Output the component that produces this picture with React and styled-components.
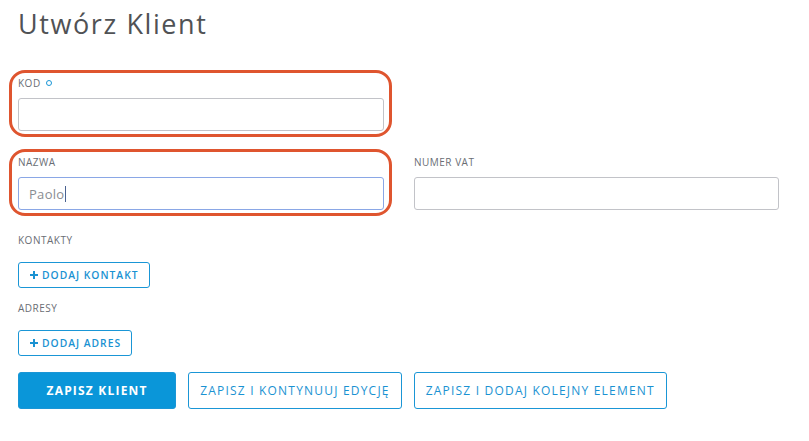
import React from "react";
import styled, { createGlobalStyle, css } from "styled-components";

const Global = createGlobalStyle`
  html, body { margin: 0; padding: 0; background: #fff; }
  body { font-family: "Open Sans", "Noto Sans", sans-serif; color: #555; }
  * { box-sizing: border-box; }
`;

const Page = styled.div`
  padding: 7px 18px 0 18px;
  width: 809px;
`;

const Title = styled.h1`
  margin: 0 0 35px 0;
  font-size: 27px;
  line-height: 34px;
  font-weight: 400;
  letter-spacing: 1.6px;
  color: #505255;
`;

const Grid = styled.div`
  display: grid;
  grid-template-columns: 366px 365px;
  column-gap: 30px;
  row-gap: 24px;
`;

const Field = styled.div`
  position: relative;
  display: flex;
  flex-direction: column;
  ${(p) =>
    p.$highlight &&
    css`
      &::after {
        content: "";
        position: absolute;
        left: -9px;
        right: -8px;
        top: -6px;
        bottom: -6px;
        border: 3.5px solid #df552f;
        border-radius: 16px;
        pointer-events: none;
      }
    `}
`;

const Label = styled.label`
  display: flex;
  align-items: center;
  height: 14px;
  margin-bottom: ${(p) => p.$gap || 8}px;
  font-size: 10px;
  line-height: 14px;
  letter-spacing: 0.5px;
  text-transform: uppercase;
  color: #6a6e75;
`;

const Required = styled.span`
  display: inline-block;
  width: 6px;
  height: 6px;
  margin-left: 5px;
  border: 1.6px solid #1a96d6;
  border-radius: 50%;
`;

const inputBase = css`
  height: 33px;
  width: 100%;
  border: 1px solid #c2c3c8;
  border-radius: 3px;
  padding: 0 10px;
  font-family: inherit;
  font-size: 13px;
  color: #8a8d92;
  background: #fff;
  outline: none;
`;

const Input = styled.input`
  ${inputBase}
`;

const FocusedInput = styled.div`
  ${inputBase}
  display: flex;
  align-items: center;
  border-color: #8aa7e6;
  letter-spacing: 0.3px;
`;

const Caret = styled.span`
  display: inline-block;
  width: 1px;
  height: 16px;
  margin-left: 1px;
  background: #4a6290;
`;

const Section = styled.div`
  display: flex;
  flex-direction: column;
  align-items: flex-start;
  margin-top: ${(p) => p.$top}px;
`;

const SmallButton = styled.button`
  height: 26px;
  padding: 0 10px 0 11px;
  display: inline-flex;
  align-items: center;
  gap: 4px;
  border: 1px solid #1a96d6;
  border-radius: 3px;
  background: #fff;
  color: #1a92d2;
  font-family: inherit;
  font-size: 10.3px;
  font-weight: 600;
  letter-spacing: 1px;
  cursor: pointer;
`;

const Plus = styled.svg`
  width: 8px;
  height: 8px;
  flex: none;
`;

const Actions = styled.div`
  display: flex;
  gap: 12px;
  margin-top: 16px;
`;

const ActionButton = styled.button`
  height: 37px;
  padding: 0 ${(p) => (p.$primary ? 27.5 : 11)}px;
  border: 1px solid #1a96d6;
  border-radius: 3px;
  background: ${(p) => (p.$primary ? "#0a96d9" : "#fff")};
  color: ${(p) => (p.$primary ? "#fff" : "#1a92d2")};
  font-family: inherit;
  font-size: 12px;
  font-weight: ${(p) => (p.$primary ? 700 : 500)};
  letter-spacing: 1.2px;
  white-space: nowrap;
  cursor: pointer;
`;

const PlusIcon = () => (
  <Plus viewBox="0 0 8 8">
    <path d="M3 0h2v3h3v2H5v3H3V5H0V3h3z" fill="#1a92d2" />
  </Plus>
);

export default function App() {
  return (
    <>
      <Global />
      <Page>
        <Title>Utwórz Klient</Title>
        <Grid>
          <Field $highlight>
            <Label>
              KOD
              <Required />
            </Label>
            <Input type="text" />
          </Field>
          <div />
          <Field $highlight>
            <Label>NAZWA</Label>
            <FocusedInput>
              Paolo
              <Caret />
            </FocusedInput>
          </Field>
          <Field>
            <Label>NUMER VAT</Label>
            <Input type="text" />
          </Field>
        </Grid>
        <Section $top={23}>
          <Label $gap={15}>KONTAKTY</Label>
          <SmallButton>
            <PlusIcon />
            DODAJ KONTAKT
          </SmallButton>
        </Section>
        <Section $top={13}>
          <Label $gap={15}>ADRESY</Label>
          <SmallButton>
            <PlusIcon />
            DODAJ ADRES
          </SmallButton>
        </Section>
        <Actions>
          <ActionButton $primary>ZAPISZ KLIENT</ActionButton>
          <ActionButton>ZAPISZ I KONTYNUUJ EDYCJĘ</ActionButton>
          <ActionButton>ZAPISZ I DODAJ KOLEJNY ELEMENT</ActionButton>
        </Actions>
      </Page>
    </>
  );
}
